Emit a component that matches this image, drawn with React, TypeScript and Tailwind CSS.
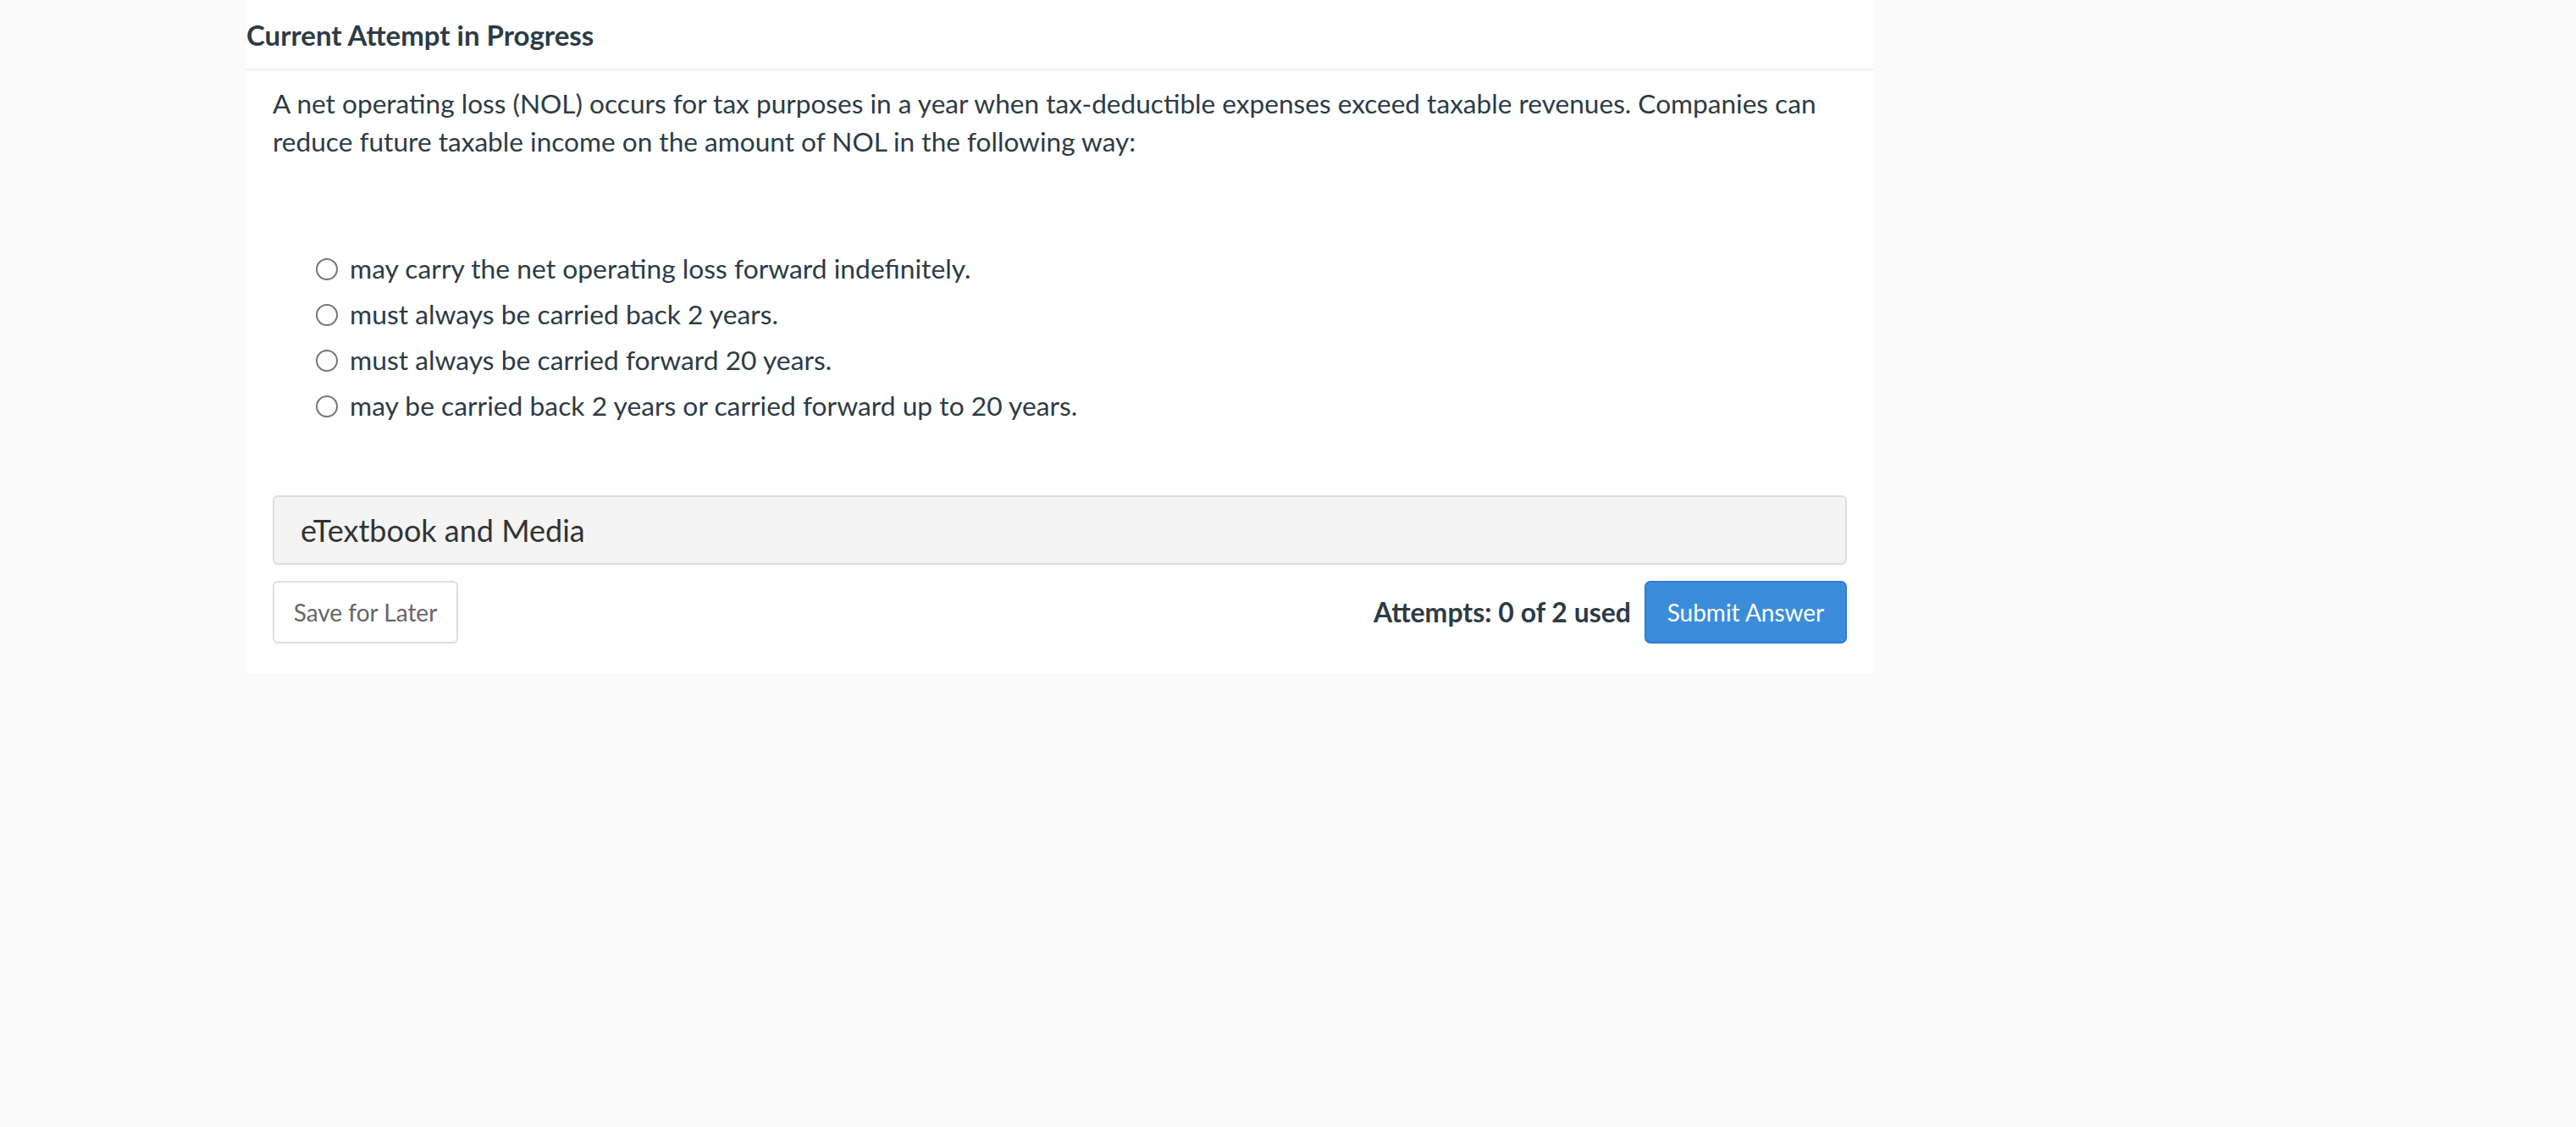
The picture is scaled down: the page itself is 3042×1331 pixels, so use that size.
export default function App() {
  const options = [
    'may carry the net operating loss forward indefinitely.',
    'must always be carried back 2 years.',
    'must always be carried forward 20 years.',
    'may be carried back 2 years or carried forward up to 20 years.',
  ]

  return (
    <div className="min-h-screen bg-[#fafafa] font-['Lato',sans-serif] text-[#2d3b45]">
      <div className="ml-[291px] w-[1921px] bg-white pb-[35px]">
        {/* Header */}
        <div className="h-[83px] flex items-center border-b-[2px] border-[#ececec]">
          <h2 className="mt-[2px] text-[33px] font-bold leading-none">Current Attempt in Progress</h2>
        </div>

        <div className="px-[31px]">
          {/* Question */}
          <p className="mt-[17px] text-[31.6px] leading-[45px]">
            A net operating loss (NOL) occurs for tax purposes in a year when tax-deductible expenses exceed taxable revenues. Companies can reduce future taxable income on the amount of NOL in the following way:
          </p>

          {/* Choices */}
          <div className="mt-[101px] pl-[51px]">
            {options.map((opt) => (
              <label key={opt} className="flex items-center h-[54px] text-[31.8px] cursor-pointer">
                <span className="w-[26px] h-[26px] rounded-full border-[2px] border-[#767676] bg-white shrink-0" />
                <span className="ml-[14px]">{opt}</span>
              </label>
            ))}
          </div>

          {/* eTextbook */}
          <div className="mt-[78px] h-[82px] flex items-center px-[31px] bg-[#f4f4f4] border-[2px] border-[#dddddd] rounded-[6px]">
            <span className="text-[36px] text-[#333333]">eTextbook and Media</span>
          </div>

          {/* Actions */}
          <div className="mt-[19px] flex items-center justify-between">
            <button className="h-[74px] w-[219px] border-[2px] border-[#dddddd] rounded-[6px] bg-white text-[28px] text-[#666666]">
              Save for Later
            </button>
            <div className="flex items-center gap-[16px]">
              <span className="text-[32px] font-bold">Attempts: 0 of 2 used</span>
              <button className="h-[74px] w-[239px] border-[2px] border-[#2e7bcf] rounded-[7px] bg-[#3b8ddb] text-[28px] text-white">
                Submit Answer
              </button>
            </div>
          </div>
        </div>
      </div>
    </div>
  )
}
